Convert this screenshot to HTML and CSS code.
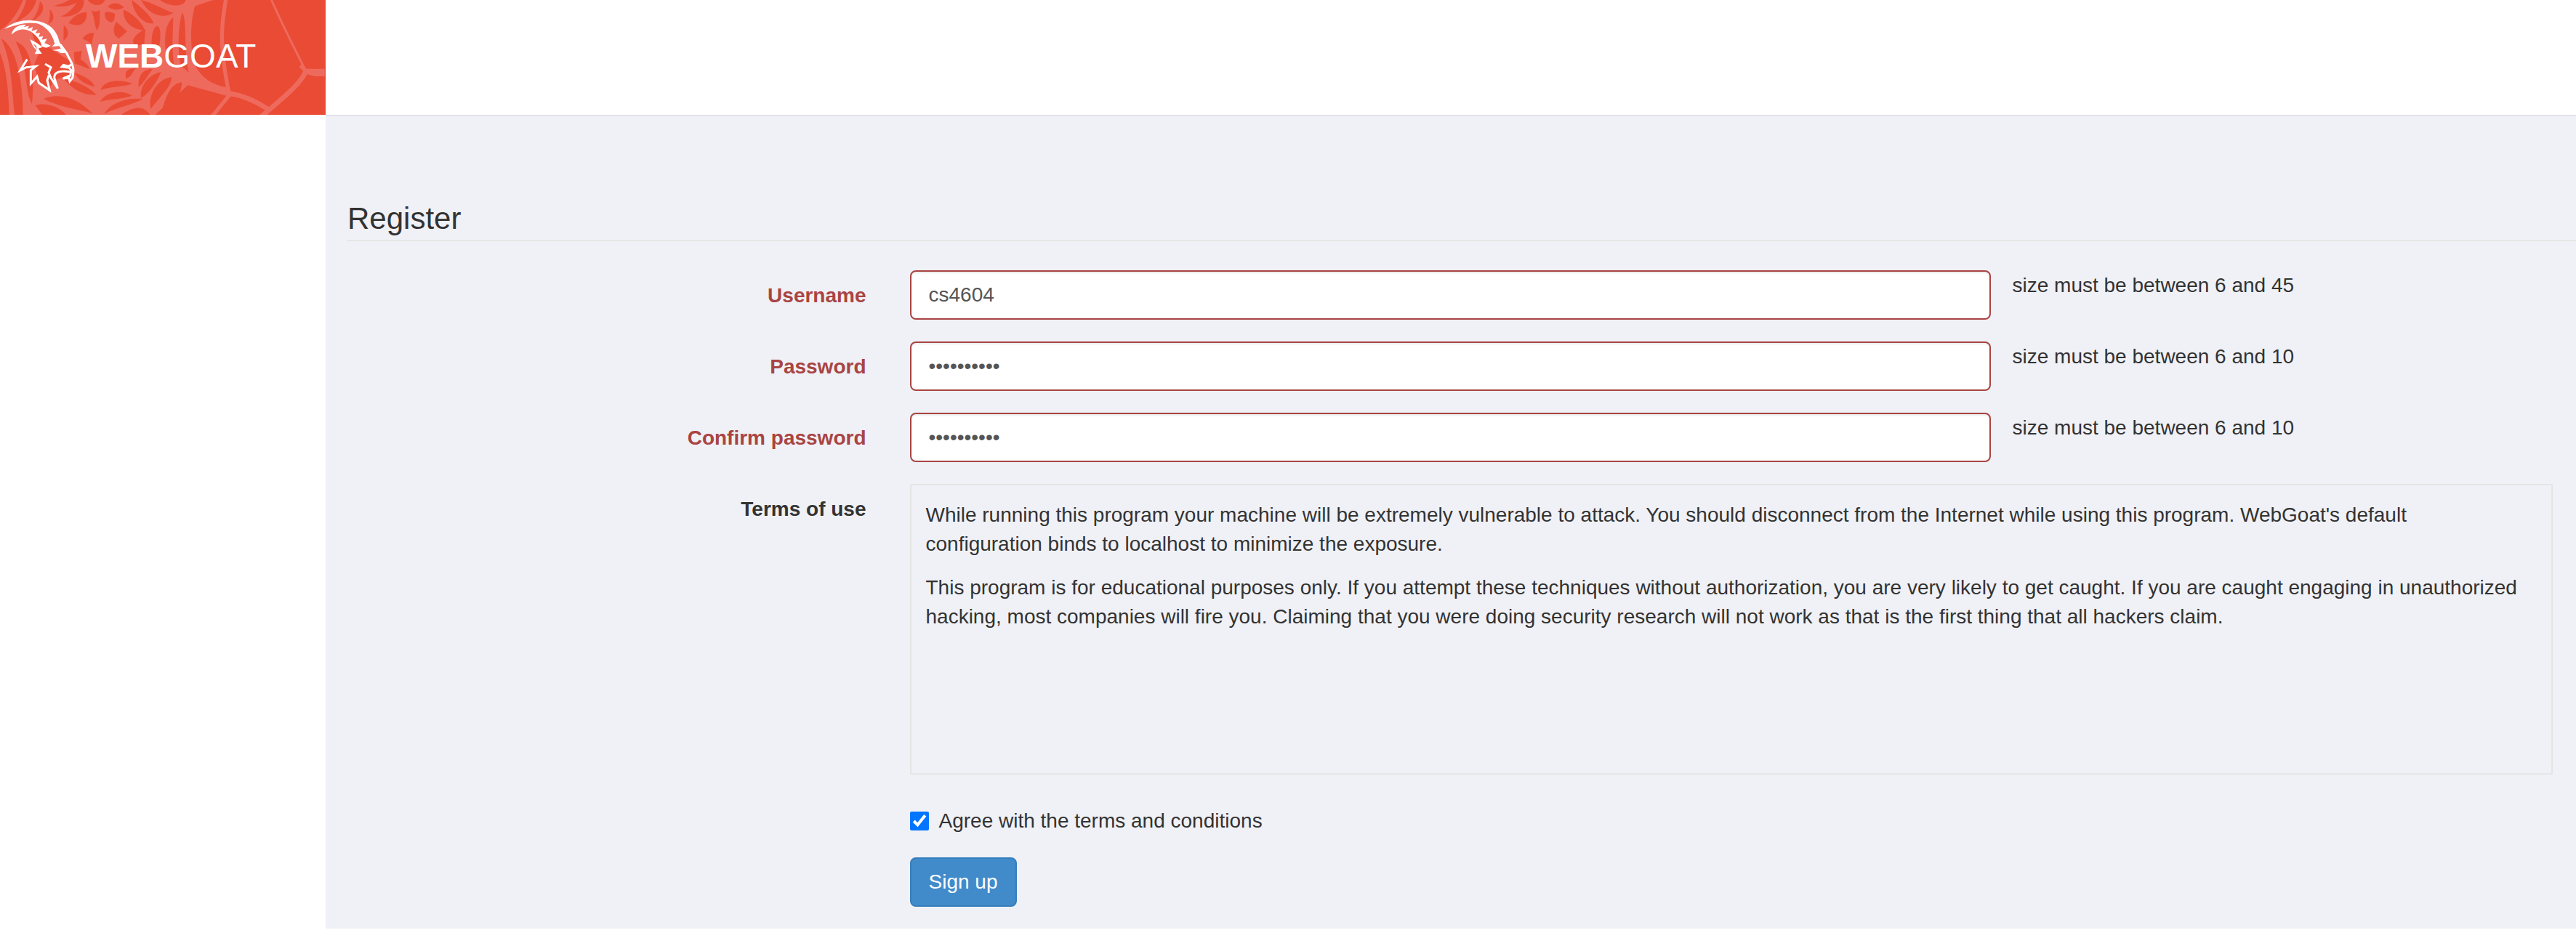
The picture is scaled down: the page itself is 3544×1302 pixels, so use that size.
FILE: index.html
```html
<!DOCTYPE html>
<html lang="en">
<head>
<meta charset="utf-8">
<meta name="viewport" content="width=device-width, initial-scale=1">
<title>WebGoat - Register</title>
<link rel="stylesheet" href="styles.css">
</head>
<body>
<header class="header">
  <a class="brand" href="#">
    <svg class="brand-art" viewBox="0 0 1344 474" preserveAspectRatio="xMinYMin slice" aria-hidden="true">
      <!-- spider web -->
      <path class="web" d="M0 0H880L805 25C785 90 785 180 798 250C820 315 870 350 940 362L950 400L775 352L640 474H0Z"/>
      <g class="web-line">
        <path d="M932 0C922 60 912 120 918 200C922 280 935 330 948 400" stroke-width="16"/>
        <path d="M780 336C830 345 890 365 945 385C1010 395 1060 420 1105 450" stroke-width="20"/>
        <path d="M945 395L876 480" stroke-width="16"/>
        <path d="M1118 -5C1160 90 1210 190 1262 292" stroke-width="9"/>
        <path d="M1262 295C1240 350 1160 410 1075 484" stroke-width="20"/>
        <path d="M1240 270L1262 292L1310 292H1340" stroke-width="16"/>
        <path d="M1262 296L1300 306H1340" stroke-width="18"/>
      </g>
      <g class="web-cell">
        <path d="M0 0H95C75 50 45 95 0 125Z"/>
        <path d="M108 0H150C140 45 105 75 62 92C85 62 100 35 108 0Z"/>
        <path d="M165 5C190 25 180 65 125 92C150 65 160 35 165 5Z"/>
        <path d="M205 38C228 60 225 90 198 98C206 78 208 60 205 38Z"/>
        <path d="M220 24C250 18 270 10 285 0H330C305 25 260 30 220 24Z"/>
        <path d="M250 68C290 55 310 20 325 0H346C350 45 310 72 250 68Z"/>
        <path d="M283 94C310 60 335 50 358 50C362 95 325 120 283 94Z"/>
        <path d="M263 105C285 120 288 150 262 168Z"/>
        <path d="M340 160C350 145 365 135 388 136L378 183C366 172 355 165 340 160Z"/>
        <path d="M376 42C388 50 398 48 412 42C410 75 418 95 400 125C388 100 390 65 376 42Z"/>
        <path d="M362 0H434C420 26 385 30 362 0Z"/>
        <path d="M445 28C460 8 490 8 512 30C490 45 465 42 445 28Z"/>
        <path d="M432 54C440 44 460 50 476 58C470 70 478 85 460 92C440 88 432 75 432 54Z"/>
        <path d="M510 40C550 60 580 85 598 125C560 125 505 100 510 40Z"/>
        <path d="M480 90L525 130L492 158C465 150 465 115 480 90Z"/>
        <path d="M545 0C570 20 620 60 635 96C590 105 545 45 545 0Z"/>
        <path d="M582 0C625 10 680 40 715 54C680 75 620 72 582 0Z"/>
        <path d="M660 0H768C755 32 700 28 660 0Z"/>
        <path d="M648 108C665 110 665 150 655 205L625 190C625 140 635 108 648 108Z"/>
        <path d="M715 72C715 130 705 210 722 285L688 240C675 160 680 100 715 72Z"/>
        <path d="M752 50C775 90 755 200 780 300L745 270C730 180 738 100 752 50Z"/>
        <path d="M600 120L595 185H560C535 175 555 140 600 120Z"/>
        <path d="M305 215L338 210L332 245C350 255 365 270 370 285L308 262Z"/>
        <path d="M262 325C320 335 375 365 397 392C340 395 295 365 262 325Z"/>
        <path d="M308 300C350 315 385 335 390 358C355 350 320 330 308 300Z"/>
        <path d="M180 408C245 380 320 405 382 468C310 450 240 440 180 408Z"/>
        <path d="M145 435C195 420 250 445 272 474H175Z"/>
        <path d="M0 218C30 290 35 390 38 474H0Z"/>
        <path d="M5 160C65 190 95 330 95 474H60C48 360 50 260 5 160Z"/>
        <path d="M65 172C130 190 145 310 132 430C100 370 115 270 65 172Z"/>
        <path d="M130 130L215 205L285 250L298 310L220 330L205 370L165 340L140 270L160 220Z"/>
        <path d="M520 325C515 290 525 285 560 282C545 300 545 315 520 325Z"/>
        <path d="M415 372C430 330 490 325 548 345C500 362 460 355 415 372Z"/>
        <path d="M412 420C440 375 510 370 545 395C500 412 460 405 412 420Z"/>
        <path d="M430 470C470 410 545 405 590 408C545 435 490 440 430 470Z"/>
        <path d="M500 474C550 440 590 432 620 474Z"/>
        <path d="M572 360C570 310 590 285 630 285C610 310 592 345 572 360Z"/>
        <path d="M582 405C575 350 620 305 665 298C650 330 625 380 582 405Z"/>
        <path d="M622 450C610 390 650 325 708 318C710 355 660 400 622 450Z"/>
        <path d="M665 474C680 410 700 345 750 340C755 380 710 430 690 474Z"/>
      </g>
      <!-- goat head -->
      <g class="goat">
        <path d="M18 119C60 84 110 80 148 86C205 94 235 125 246 175L270 208L276 218L250 219L238 211L216 207L240 203L252 200L244 190L214 193L226 180C216 138 188 106 150 96C105 89 60 105 18 119Z"/>
        <path d="M48 143C50 120 72 101 108 102L98 111L120 107L113 120L136 112L130 128L155 121L146 138L166 136L159 152L178 150L172 164L194 160L184 178L209 188C195 199 182 199 172 190C168 168 150 145 125 129C100 115 70 120 48 143Z"/>
        <path fill-rule="evenodd" d="M124 162L150 176L176 194L158 200L173 222L143 223L151 207C136 195 131 180 124 162ZM137 180L152 204L150 190Z"/>
      </g>
      <g class="goat-line">
        <path d="M112 245L84 290L108 278L148 274L127 290L127 345L153 316L160 342L205 373L195 332L202 310"/>
        <path d="M186 264L210 278L201 300L212 325L238 365L225 325C220 300 245 288 290 297"/>
        <path d="M250 185C270 215 276 215 280 230C290 250 302 262 303 290L300 320L288 336L284 322L260 324L290 312L294 290L285 280L255 276L262 268L284 274L298 264"/>
      </g>
    </svg>
    <span class="brand-name"><b>WEB</b>GOAT</span>
  </a>
  <div class="header-bar"></div>
</header>

<main class="content">
  <form class="form">
    <h1 class="title">Register</h1>

    <div class="row has-error">
      <label class="label" for="username">Username</label>
      <div class="field"><input class="input" id="username" type="text" value="cs4604"></div>
      <div class="message">size must be between 6 and 45</div>
    </div>
    <div class="row has-error">
      <label class="label" for="password">Password</label>
      <div class="field"><input class="input" id="password" type="password" value="abcdefghij"></div>
      <div class="message">size must be between 6 and 10</div>
    </div>
    <div class="row has-error">
      <label class="label" for="confirm">Confirm password</label>
      <div class="field"><input class="input" id="confirm" type="password" value="abcdefghij"></div>
      <div class="message">size must be between 6 and 10</div>
    </div>

    <div class="row">
      <div class="label" id="terms-label">Terms of use</div>
      <div class="field field-wide">
        <div class="terms" role="group" aria-labelledby="terms-label">
          <p>While running this program your machine will be extremely vulnerable to attack. You should disconnect from the Internet while using this program. WebGoat's default configuration binds to localhost to minimize the exposure.</p>
          <p>This program is for educational purposes only. If you attempt these techniques without authorization, you are very likely to get caught. If you are caught engaging in unauthorized hacking, most companies will fire you. Claiming that you were doing security research will not work as that is the first thing that all hackers claim.</p>
        </div>
      </div>
    </div>

    <div class="row">
      <div class="field field-wide">
        <label class="agree"><input class="check" type="checkbox" checked>Agree with the terms and conditions</label>
      </div>
    </div>
    <div class="row">
      <div class="field field-wide">
        <button class="button" type="submit">Sign up</button>
      </div>
    </div>
  </form>
</main>
</body>
</html>
```

FILE: styles.css
```css
* {
  box-sizing: border-box;
}

body {
  margin: 0;
  background: #fff;
  color: #333;
  font: 28px/40px "Liberation Sans", Arial, sans-serif;
}

.header {
  display: flex;
  height: 160px;
}

.brand {
  display: grid;
  flex: none;
  width: 448px;
  height: 158px;
  overflow: hidden;
  background: #ea4b35;
  color: #fff;
  text-decoration: none;
}

.brand-art,
.brand-name {
  grid-area: 1 / 1;
}

.brand-art {
  width: 448px;
  height: 158px;
}

.brand-name {
  padding: 50px 0 0 118px;
  font-size: 46px;
  line-height: 54px;
}

.web {
  fill: #ee6a5d;
}

.web-line {
  fill: none;
  stroke: #ee6a5d;
}

.web-cell {
  fill: #ea4b35;
}

.goat {
  fill: #fff;
}

.goat-line {
  fill: none;
  stroke: #fff;
  stroke-width: 9px;
}

.header-bar {
  flex: 1;
  border-bottom: 2px solid #e2e3ea;
}

.content {
  margin-left: 448px;
  padding: 112px 0 30px;
  background: #f0f1f6;
}

.title {
  margin: 0 0 40px 30px;
  border-bottom: 2px solid #e5e5e5;
  font-size: 42px;
  font-weight: 400;
  line-height: 58px;
}

.row {
  display: grid;
  grid-template-columns: 1fr 2fr 1fr;
  margin: 0 2px 30px 0;
}

.row:last-child {
  margin-bottom: 0;
}

.label {
  padding: 15px 30px 0;
  font-weight: 700;
  text-align: right;
}

.has-error .label {
  color: #a94442;
}

.message {
  padding-top: 1px;
}

.field {
  padding: 0 30px;
}

.field-wide {
  grid-column: 2 / 4;
}

.input {
  display: block;
  width: 100%;
  height: 68px;
  padding: 12px 24px;
  border: 2px solid #a94442;
  border-radius: 8px;
  background: #fff;
  box-shadow: inset 0 2px 2px rgba(0, 0, 0, 0.075);
  color: #555;
  font: inherit;
}

.terms {
  height: 400px;
  padding: 21px 40px 20px 20px;
  overflow: auto;
  border: 2px solid #e5e5e5;
}

.terms p {
  margin: 0 0 20px;
}

.agree {
  display: flex;
  align-items: center;
  gap: 14px;
  padding-top: 14px;
}

.check {
  width: 26px;
  height: 26px;
  margin: 0;
  accent-color: #0075ff;
}

.button {
  display: block;
  height: 68px;
  padding: 12px 25px 12px 24px;
  border: 2px solid #357ebd;
  border-radius: 8px;
  background: #428bca;
  color: #fff;
  font: inherit;
}
```
